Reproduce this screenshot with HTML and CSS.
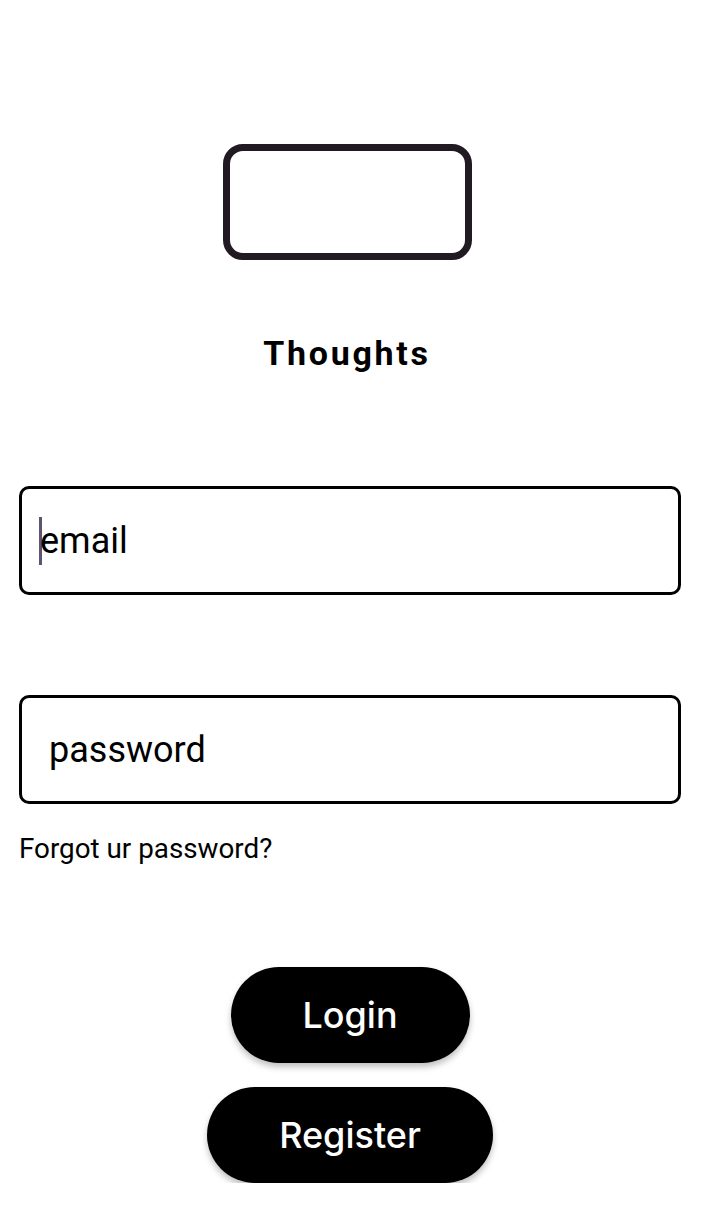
FILE: index.html
```html
<!DOCTYPE html>
<html>
<head>
<meta charset="utf-8">
<link rel="stylesheet" href="styles.css">
</head>
<body>
<main class="page">
  <div class="logo"></div>
  <h1 class="title">Thoughts</h1>
  <div class="field field-email"><span class="caret"></span><span class="field-text">email</span></div>
  <div class="field field-password"><span class="field-text">password</span></div>
  <a class="forgot">Forgot ur password?</a>
  <div class="actions">
    <button class="btn btn-login">Login</button>
    <button class="btn btn-register">Register</button>
  </div>
</main>
</body>
</html>
```
FILE: styles.css
```css
html, body {
  margin: 0;
  padding: 0;
  background: #ffffff;
}
.page {
  display: flex;
  flex-direction: column;
  align-items: stretch;
  padding: 144px 22px 0 19px;
  font-family: Roboto, "Liberation Sans", sans-serif;
  color: #000;
}
.logo {
  align-self: center;
  width: 235px;
  height: 102px;
  border: 7px solid #221a22;
  border-radius: 20px;
  box-sizing: content-box;
  margin-right: 6px;
}
.title {
  align-self: center;
  margin: 73px 6px 0 0;
  font-family: Roboto, "Liberation Sans", sans-serif;
  font-weight: 700;
  font-size: 34px;
  letter-spacing: 2.7px;
  line-height: 40px;
}
.field {
  height: 103px;
  border: 3px solid #000;
  border-radius: 10px;
  display: flex;
  align-items: center;
  font-size: 36px;
}
.field-email {
  margin-top: 113px;
  padding-left: 17px;
}
.field-password {
  margin-top: 100px;
  padding-left: 27px;
}
.caret {
  display: inline-block;
  width: 3px;
  height: 48px;
  background: #5c5470;
  margin-right: -2px;
}
.field-text {
  line-height: 40px;
}
.forgot {
  margin-top: 30px;
  font-size: 27.8px;
  line-height: 30px;
}
.actions {
  margin-top: 103px;
  display: flex;
  flex-direction: column;
  align-items: center;
  gap: 24px;
}
.btn {
  height: 96px;
  border: none;
  border-radius: 48px;
  background: #000;
  color: #fff;
  font-family: Inter, Roboto, sans-serif;
  font-size: 36px;
  font-weight: 500;
  box-shadow: 0 4px 6px rgba(0,0,0,0.25);
}
.btn-login {
  width: 239px;
}
.btn-register {
  width: 286px;
}
```
